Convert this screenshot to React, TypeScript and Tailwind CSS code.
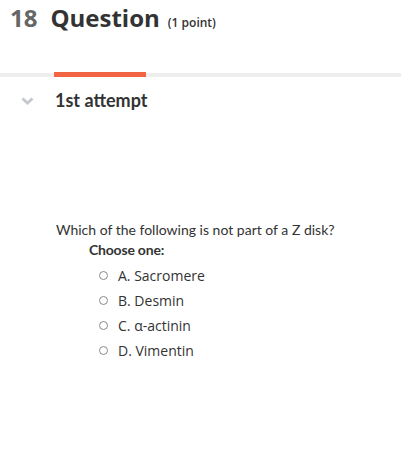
const OPTIONS = ['A. Sacromere', 'B. Desmin', 'C. α-actinin', 'D. Vimentin']

export default function App() {
  return (
    <div className="w-[401px] h-[455px] bg-white overflow-hidden">
      {/* Kopfzeile */}
      <div className="flex items-baseline pl-[10px] pt-[2px] h-[42px] leading-[32px] font-['Open_Sans',sans-serif] font-bold">
        <span className="text-[24px] text-[#666666]">18</span>
        <span className="text-[24px] text-[#333333] ml-[13px]">Question</span>
        <span className="text-[12px] text-[#333333] ml-[8px] font-semibold">(1 point)</span>
      </div>

      {/* Tabs */}
      <div className="mt-[30px] h-[5px] flex items-end">
        <div className="w-[54px] h-[4px] bg-[#eeeeee]" />
        <div className="w-[92px] h-[5px] bg-[#f26542]" />
        <div className="flex-1 h-[4px] bg-[#eeeeee]" />
      </div>

      <div className="flex items-center h-[46px] font-['Lato',sans-serif]">
        <div className="w-[55px] flex pl-[21px] pt-[2px]">
          <svg width="13" height="8" viewBox="0 0 13 8" fill="none">
            <polyline points="1.5,1.5 6.5,6 11.5,1.5" stroke="#c5c8cf" strokeWidth="3" />
          </svg>
        </div>
        <span className="text-[18px] font-bold text-[#333333]">1st attempt</span>
      </div>

      {/* Frage */}
      <div className="pl-[56px] mt-[97px] font-['Lato',sans-serif] text-[14px] text-[#333333]">
        <p className="leading-[20px]">Which of the following is not part of a Z disk?</p>
        <p className="pl-[33px] font-bold leading-[20px] tracking-[-0.2px]">Choose one:</p>
        <div className="pl-[43px] mt-[3px] flex flex-col font-['Open_Sans',sans-serif]">
          {OPTIONS.map((o) => (
            <label key={o} className="flex items-center h-[25px]">
              <span className="w-[9px] h-[9px] rounded-full border border-[#8a8a8a] bg-white" />
              <span className="ml-[10px] text-[14px] text-[#333333]">{o}</span>
            </label>
          ))}
        </div>
      </div>
    </div>
  )
}
